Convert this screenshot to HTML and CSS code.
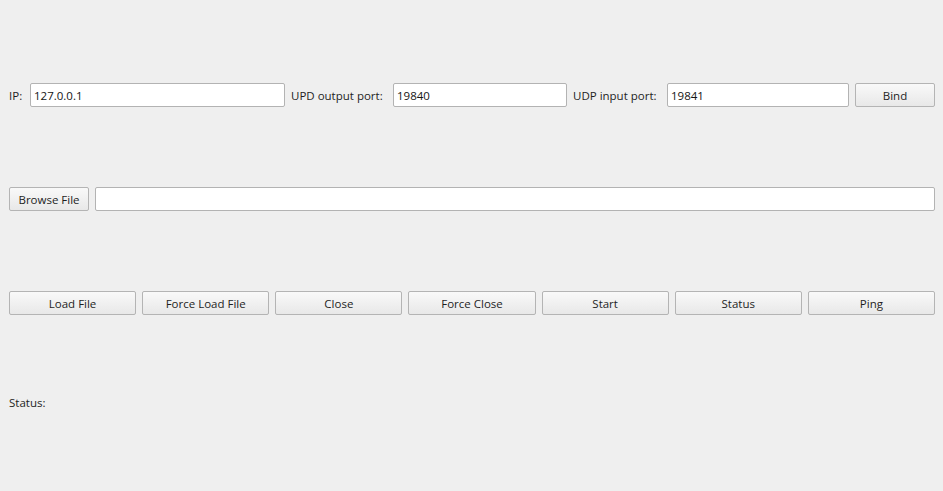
FILE: index.html
```html
<!DOCTYPE html>
<html>
<head>
<meta charset="utf-8">
<link rel="stylesheet" href="styles.css">
</head>
<body>
<div class="window">
  <div class="row">
    <span class="label l-ip">IP:</span>
    <div class="field f-ip">127.0.0.1</div>
    <span class="label l-out">UPD output port:</span>
    <div class="field f-out">19840</div>
    <span class="label l-in">UDP input port:</span>
    <div class="field f-in">19841</div>
    <div class="btn b-bind">Bind</div>
  </div>
  <div class="row">
    <div class="btn b-browse">Browse File</div>
    <div class="field f-file"></div>
  </div>
  <div class="row">
    <div class="btn grow">Load File</div>
    <div class="btn grow">Force Load File</div>
    <div class="btn grow">Close</div>
    <div class="btn grow">Force Close</div>
    <div class="btn grow">Start</div>
    <div class="btn grow">Status</div>
    <div class="btn grow">Ping</div>
  </div>
  <div class="status">Status:</div>
</div>
</body>
</html>
```

FILE: styles.css
```css
html, body {
  margin: 0;
  padding: 0;
  background: #efefef;
  width: 943px;
  height: 491px;
  overflow: hidden;
}
.window {
  box-sizing: border-box;
  width: 943px;
  height: 491px;
  padding: 83px 8px 0 9px;
  display: flex;
  flex-direction: column;
  gap: 80px;
  font-family: "Open Sans", "Noto Sans", sans-serif;
  font-size: 11.5px;
  color: #1e1e1e;
}
.row {
  display: flex;
  gap: 6px;
  height: 24px;
  align-items: stretch;
}
.label {
  display: flex;
  align-items: center;
  white-space: nowrap;
}
.l-ip { width: 15px; }
.l-out { width: 96px; }
.l-in { width: 88px; }
.field {
  box-sizing: border-box;
  background: #ffffff;
  border: 1px solid #b3b3b3;
  border-radius: 2px;
  padding: 0 3px;
  display: flex;
  align-items: center;
  color: #141414;
}
.f-ip { width: 255px; }
.f-out { width: 174px; }
.f-in { width: 182px; }
.f-file { flex: 1; }
.btn {
  box-sizing: border-box;
  border: 1px solid #b4b4b4;
  border-radius: 2px;
  background: linear-gradient(#f9f9f9, #e8e8e8);
  display: flex;
  align-items: center;
  justify-content: center;
  white-space: nowrap;
  color: #1e1e1e;
}
.b-bind { width: 80px; }
.b-browse { width: 80px; }
.grow { flex: 1; }
.status {
  margin-top: -1px;
  height: 18px;
  line-height: 18px;
}
```
